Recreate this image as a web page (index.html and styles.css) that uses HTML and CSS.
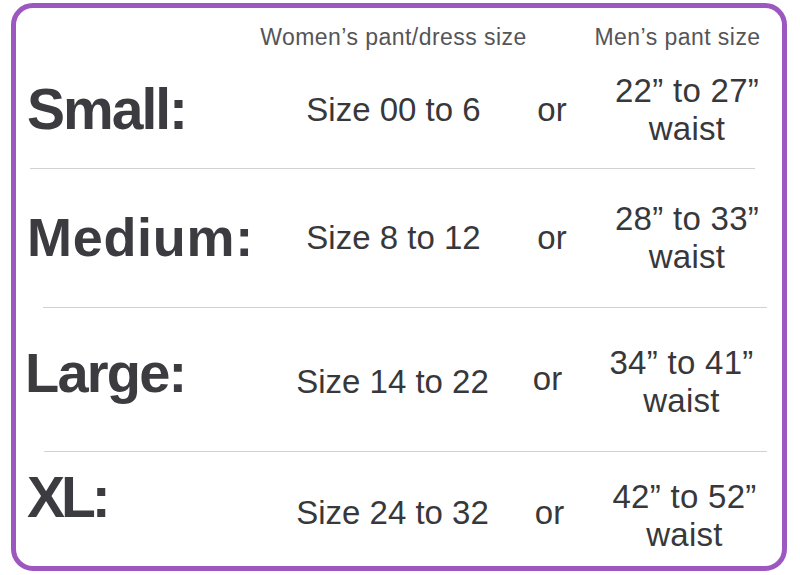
FILE: index.html
```html
<!DOCTYPE html>
<html lang="en">
<head>
<meta charset="utf-8">
<title>Size chart</title>
<link rel="stylesheet" href="styles.css">
</head>
<body>
<div class="card">
  <div class="head">
    <div></div>
    <div class="cell women">Women’s pant/dress size</div>
    <div></div>
    <div class="cell men">Men’s pant size</div>
  </div>

  <div class="row row--small">
    <div class="label">Small:</div>
    <div class="cell women">Size 00 to 6</div>
    <div class="cell or">or</div>
    <div class="cell men"><span>22” to 27”</span><span>waist</span></div>
  </div>
  <div class="divider divider--1"></div>

  <div class="row row--medium">
    <div class="label">Medium:</div>
    <div class="cell women">Size 8 to 12</div>
    <div class="cell or">or</div>
    <div class="cell men"><span>28” to 33”</span><span>waist</span></div>
  </div>
  <div class="divider divider--2"></div>

  <div class="row row--large">
    <div class="label">Large:</div>
    <div class="cell women">Size 14 to 22</div>
    <div class="cell or">or</div>
    <div class="cell men"><span>34” to 41”</span><span>waist</span></div>
  </div>
  <div class="divider divider--3"></div>

  <div class="row row--xl">
    <div class="label">XL:</div>
    <div class="cell women">Size 24 to 32</div>
    <div class="cell or">or</div>
    <div class="cell men"><span>42” to 52”</span><span>waist</span></div>
  </div>
</div>
</body>
</html>
```

FILE: styles.css
```css
* { box-sizing: border-box; }

html, body {
  margin: 0;
  padding: 0;
  background: #ffffff;
}

body {
  font-family: "Liberation Sans", Arial, sans-serif;
  color: #38383b;
  padding: 3px 13px 4px 11px;
}

.card {
  height: 568px;
  border: 5px solid #9c57c0;
  border-radius: 22px;
  display: flex;
  flex-direction: column;
  overflow: hidden;
}

.head,
.row {
  display: grid;
  grid-template-columns: 284px 187px 130px 140px 1fr;
  align-items: center;
}

.head {
  padding-top: 15px;
  height: 43px;
  font-size: 23px;
  line-height: 28px;
  letter-spacing: 0.45px;
  color: #555558;
  align-items: start;
}

.cell {
  display: flex;
  flex-direction: column;
  align-items: center;
  justify-content: center;
  white-space: nowrap;
}

.row .cell {
  font-size: 33px;
  line-height: 38px;
}

.row .men {
  letter-spacing: 0.3px;
}

.head .men {
  padding-right: 19px;
}

.label {
  font-weight: 700;
  font-size: 56px;
  line-height: 64px;
  color: #3b3b40;
  padding-left: 11px;
  white-space: nowrap;
}

/* row heights and fine alignment */
.row--small { height: 117px; }
.row--small .label { font-size: 57px; letter-spacing: -2px; margin-bottom: 2px; }

.row--medium { height: 138px; }
.row--medium .label { font-size: 54px; letter-spacing: 0.7px; margin-bottom: 3px; }

.row--large { height: 143px; padding-top: 4px; }
.row--large .label { letter-spacing: -1.8px; padding-left: 9px; margin-bottom: 18px; }
.row--large .or { padding-right: 9px; margin-bottom: 6px; }
.row--large .men { padding-right: 11px; }
.row--large .women { padding-right: 2px; }

.row--xl { flex: 1; padding-top: 7px; }
.row--xl .label { font-size: 57px; letter-spacing: -4px; padding-left: 11px; margin-bottom: 32px; }
.row--xl .women { padding-right: 2px; }
.row--xl .or { padding-right: 5px; }
.row--xl .men { padding-right: 5px; margin-top: 6px; }

.divider {
  height: 1px;
  flex: none;
  background: #d2d2d4;
}

.divider--1 { margin: 0 27px 0 14px; }
.divider--2 { margin: 0 15px 0 27px; }
.divider--3 { margin: 0 15px 0 28px; }
```
